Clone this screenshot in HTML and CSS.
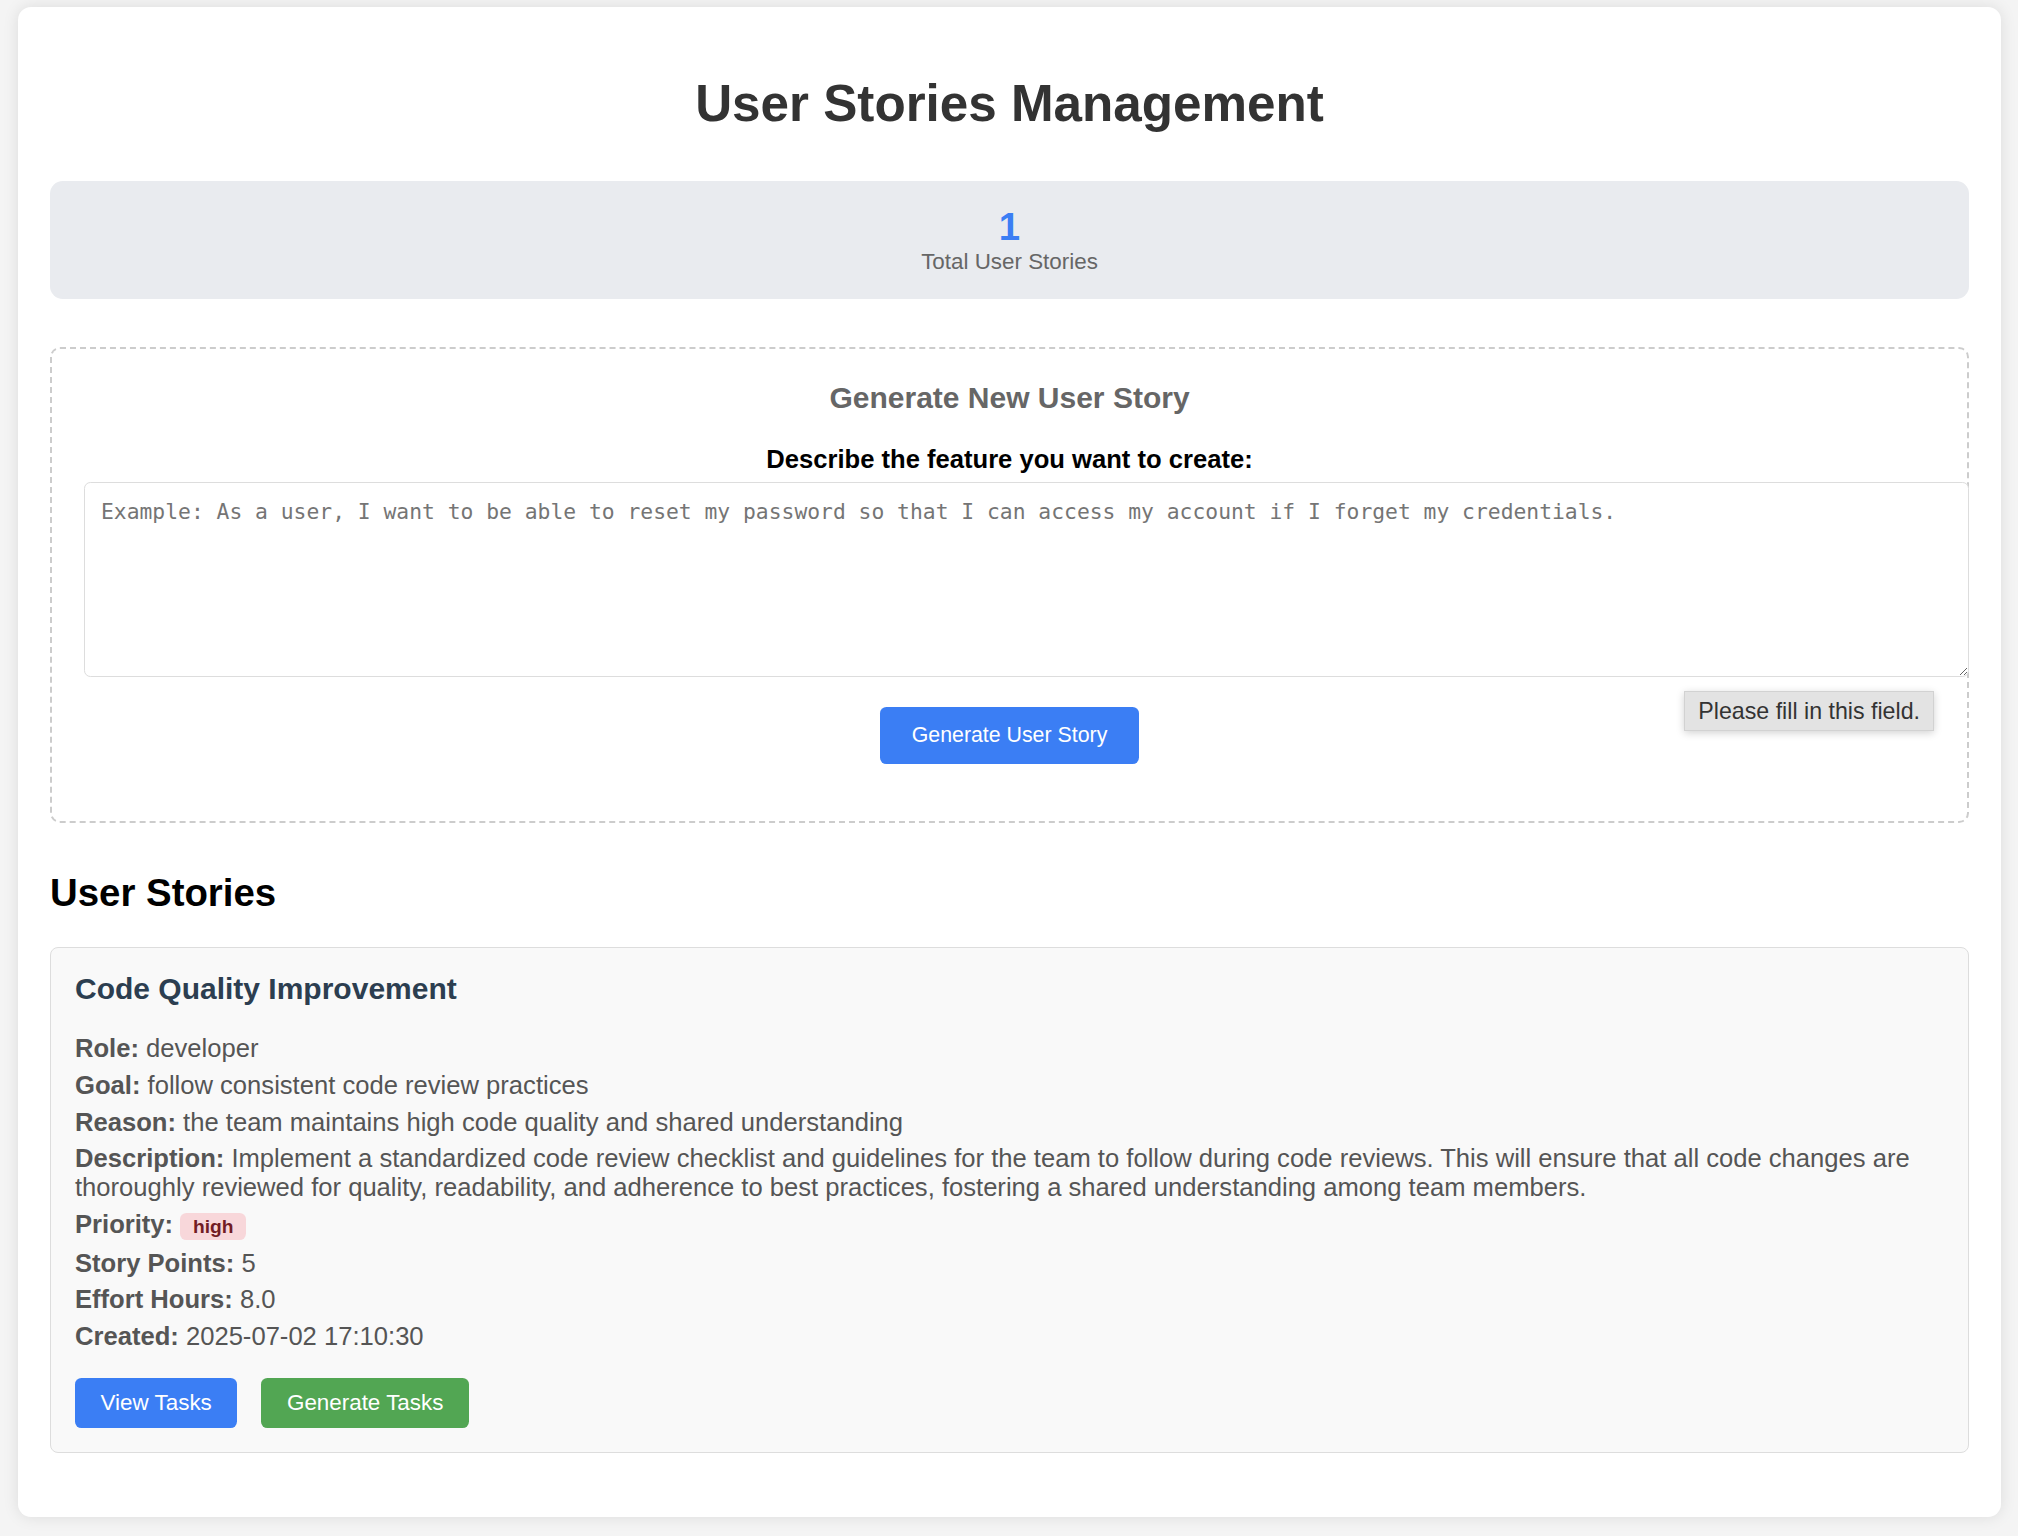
FILE: index.html
```html
<!DOCTYPE html>
<html lang="en">
<head>
<meta charset="utf-8">
<title>User Stories Management</title>
<link rel="stylesheet" href="styles.css">
</head>
<body>
<div class="container">
  <h1 class="page-title">User Stories Management</h1>

  <div class="stats">
    <div class="stat-number">1</div>
    <div class="stat-label">Total User Stories</div>
  </div>

  <div class="generator">
    <h3 class="generator-title">Generate New User Story</h3>
    <label class="field-label" for="feature">Describe the feature you want to create:</label>
    <textarea id="feature" class="feature-input" placeholder="Example: As a user, I want to be able to reset my password so that I can access my account if I forget my credentials."></textarea>
    <div class="generator-actions">
      <button class="btn btn-primary btn-large" type="button">Generate User Story</button>
    </div>
    <div class="validation-tip">Please fill in this field.</div>
  </div>

  <h2 class="section-title">User Stories</h2>

  <div class="story-card">
    <h3 class="story-title">Code Quality Improvement</h3>
    <p class="story-row"><strong>Role:</strong> developer</p>
    <p class="story-row"><strong>Goal:</strong> follow consistent code review practices</p>
    <p class="story-row"><strong>Reason:</strong> the team maintains high code quality and shared understanding</p>
    <p class="story-row"><strong>Description:</strong> Implement a standardized code review checklist and guidelines for the team to follow during code reviews. This will ensure that all code changes are thoroughly reviewed for quality, readability, and adherence to best practices, fostering a shared understanding among team members.</p>
    <p class="story-row"><strong>Priority:</strong> <span class="badge badge-high">high</span></p>
    <p class="story-row"><strong>Story Points:</strong> 5</p>
    <p class="story-row"><strong>Effort Hours:</strong> 8.0</p>
    <p class="story-row"><strong>Created:</strong> 2025-07-02 17:10:30</p>
    <div class="story-actions">
      <button class="btn btn-primary btn-card" type="button">View Tasks</button>
      <button class="btn btn-success btn-card" type="button">Generate Tasks</button>
    </div>
  </div>
</div>
</body>
</html>
```

FILE: styles.css
```css
html, body {
  margin: 0;
}

body {
  background: #f4f4f4;
  font-family: "Liberation Sans", Arial, Helvetica, sans-serif;
  padding: 7px 17px 18px 18px;
}

.container {
  background: #ffffff;
  border-radius: 13px;
  box-shadow: 0 0 16px rgba(0, 0, 0, 0.1);
  padding: 32px;
}

.page-title {
  color: #333333;
  font-size: 51.2px;
  font-weight: bold;
  text-align: center;
  margin: 36px 0 47px;
  line-height: 58.8px;
}

.stats {
  background: #e9ebef;
  border-radius: 12.8px;
  padding: 24px;
  text-align: center;
  margin-bottom: 48px;
}

.stat-number {
  color: #3b7ef4;
  font-size: 38.4px;
  font-weight: bold;
  line-height: 44px;
}

.stat-label {
  color: #666666;
  font-size: 22.4px;
  line-height: 25.7px;
}

.generator {
  position: relative;
  border: 2px dashed #cccccc;
  border-radius: 10px;
  padding: 32px 32px 57px;
}

.generator-title {
  color: #666666;
  font-size: 30px;
  font-weight: bold;
  text-align: center;
  margin: 0 0 30px;
  line-height: 34.5px;
}

.field-label {
  display: block;
  color: #000000;
  font-size: 25.6px;
  font-weight: bold;
  text-align: center;
  line-height: 29.4px;
  margin-bottom: 8px;
}

.feature-input {
  display: block;
  box-sizing: content-box;
  width: 100%;
  height: 161px;
  margin: 0 0 30px;
  padding: 16px;
  border: 1.6px solid #dddddd;
  border-radius: 6.4px;
  background: #ffffff;
  font-family: "DejaVu Sans Mono", "Liberation Mono", monospace;
  font-size: 21.33px;
  color: #333333;
}

.feature-input::placeholder {
  color: #757575;
}

.generator-actions {
  display: flex;
  justify-content: center;
}

.btn {
  border: none;
  border-radius: 6.4px;
  color: #ffffff;
  font-family: "Liberation Sans", Arial, Helvetica, sans-serif;
  font-size: 21.33px;
  line-height: 24px;
  padding: 13px 25.6px;
  cursor: pointer;
}

.btn-large {
  padding: 16px 32px;
  line-height: 24.5px;
}

.btn-card {
  font-size: 22.4px;
}

.btn-primary {
  background: #3b7ef4;
}

.btn-success {
  background: #52a653;
}

.validation-tip {
  position: absolute;
  top: 342px;
  right: 33px;
  background: #e3e3e3;
  border: 1px solid #d2d2d2;
  box-shadow: 0 2px 8px rgba(0, 0, 0, 0.18);
  color: #333333;
  font-size: 23.2px;
  line-height: 28px;
  padding: 5px 13px;
}

.section-title {
  color: #000000;
  font-size: 38.4px;
  font-weight: bold;
  line-height: 44px;
  margin: 48px 0 32px;
}

.story-card {
  background: #f9f9f9;
  border: 1.6px solid #dddddd;
  border-radius: 8px;
  padding: 24px;
  margin-bottom: 32px;
}

.story-title {
  color: #2c3e50;
  font-size: 30px;
  font-weight: bold;
  line-height: 34.5px;
  margin: 0 0 28px;
}

.story-row {
  color: #555555;
  font-size: 25.6px;
  line-height: 29.2px;
  margin: 7.4px 0;
}

.story-row strong {
  font-weight: bold;
}

.badge {
  display: inline;
  font-size: 19.2px;
  font-weight: bold;
  padding: 3.2px 12.8px;
  border-radius: 6.4px;
}

.badge-high {
  background: #f8d7da;
  color: #721c24;
}

.story-actions {
  display: flex;
  gap: 24px;
  margin-top: 27px;
}
```
